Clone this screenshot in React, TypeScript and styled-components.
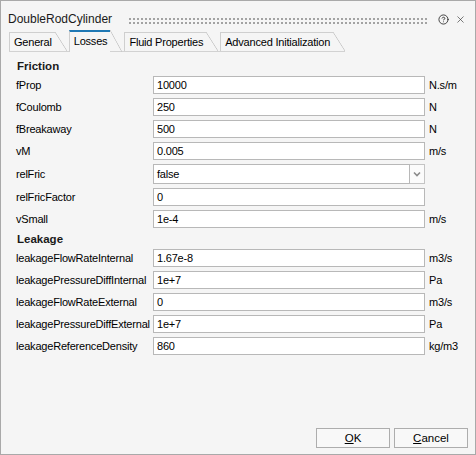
import React from "react";
import styled, { createGlobalStyle } from "styled-components";
import { CircleHelp, X } from "lucide-react";

const GlobalStyle = createGlobalStyle`
  html, body {
    margin: 0;
    padding: 0;
    background: #f5f5f5;
  }
  * {
    box-sizing: border-box;
  }
`;

type Row = { label: string; value: string; unit?: string; combo?: boolean };

const friction: Row[] = [
  { label: "fProp", value: "10000", unit: "N.s/m" },
  { label: "fCoulomb", value: "250", unit: "N" },
  { label: "fBreakaway", value: "500", unit: "N" },
  { label: "vM", value: "0.005", unit: "m/s" },
  { label: "relFric", value: "false", combo: true },
  { label: "relFricFactor", value: "0" },
  { label: "vSmall", value: "1e-4", unit: "m/s" },
];

const leakage: Row[] = [
  { label: "leakageFlowRateInternal", value: "1.67e-8", unit: "m3/s" },
  { label: "leakagePressureDiffInternal", value: "1e+7", unit: "Pa" },
  { label: "leakageFlowRateExternal", value: "0", unit: "m3/s" },
  { label: "leakagePressureDiffExternal", value: "1e+7", unit: "Pa" },
  { label: "leakageReferenceDensity", value: "860", unit: "kg/m3" },
];

const tabs = ["General", "Losses", "Fluid Properties", "Advanced Initialization"];

export default function App() {
  return (
    <>
      <GlobalStyle />
      <Window>
        <TitleBar>
          <Title>DoubleRodCylinder</Title>
          <Grip />
          <TitleIcons>
            <CircleHelp size={11} strokeWidth={1.8} color="#222" />
            <X size={11} strokeWidth={1.4} color="#333" />
          </TitleIcons>
        </TitleBar>
        <TabStrip>
          <TabRow>
            {tabs.map((t) => (
              <Tab key={t} $active={t === "Losses"}>
                {t}
              </Tab>
            ))}
          </TabRow>
        </TabStrip>
        <Content>
          <Section>
            <Heading>Friction</Heading>
            <FormGrid>
              {friction.map((r) => (
                <FieldRow key={r.label} row={r} />
              ))}
            </FormGrid>
          </Section>
          <Section $spaced>
            <Heading>Leakage</Heading>
            <FormGrid>
              {leakage.map((r) => (
                <FieldRow key={r.label} row={r} />
              ))}
            </FormGrid>
          </Section>
        </Content>
        <Footer>
          <Button>
            <u>O</u>K
          </Button>
          <Button>
            <u>C</u>ancel
          </Button>
        </Footer>
      </Window>
    </>
  );
}

function FieldRow({ row }: { row: Row }) {
  return (
    <>
      <Label>{row.label}</Label>
      {row.combo ? (
        <Combo>
          <ComboValue>{row.value}</ComboValue>
          <DropButton>
            <svg width="8" height="6" viewBox="0 0 8 6">
              <path d="M1 1.5 L4 4.5 L7 1.5" fill="none" stroke="#8a8a8a" strokeWidth="1.6" />
            </svg>
          </DropButton>
        </Combo>
      ) : (
        <Input readOnly value={row.value} />
      )}
      <Unit>{row.unit ?? ""}</Unit>
    </>
  );
}

const Window = styled.div`
  width: 476px;
  height: 455px;
  border: 1px solid #a9a9a9;
  background: #f5f5f5;
  display: flex;
  flex-direction: column;
  font-family: "Liberation Sans", Arial, sans-serif;
  color: #000;
`;

const TitleBar = styled.div`
  height: 29px;
  padding: 7px 9px 0 7px;
  display: flex;
  align-items: center;
`;

const Title = styled.span`
  font-size: 12px;
  color: #1a1a1a;
`;

const Grip = styled.div`
  flex: 1;
  height: 8px;
  margin: 4px 10px 0 16px;
  background-image: radial-gradient(circle at 2px 2px, #a3a3a3 0.75px, transparent 1px);
  background-size: 4px 4px;
`;

const TitleIcons = styled.div`
  display: flex;
  align-items: center;
  gap: 6px;
`;

const TabStrip = styled.div`
  height: 22px;
  padding-left: 8px;
  display: flex;
  align-items: flex-end;
`;

const TabRow = styled.div`
  display: flex;
  align-items: flex-end;
  border-bottom: 1px solid #d2d2d2;
  padding-right: 12px;
`;

const Tab = styled.div<{ $active?: boolean }>`
  position: relative;
  margin-right: 14px;
  padding: 0 3px 0 4px;
  font-size: 11px;
  letter-spacing: -0.2px;
  white-space: nowrap;
  border-left: 1px solid #cfcfcf;
  border-top: ${(p) => (p.$active ? "2px solid #1f78b4" : "1px solid #cfcfcf")};
  background: #f5f5f5;
  height: ${(p) => (p.$active ? "22px" : "19px")};
  line-height: 18px;
  margin-bottom: ${(p) => (p.$active ? "-1px" : "0")};

  &:last-child {
    margin-right: 0;
  }

  &::after {
    content: "";
    position: absolute;
    left: 100%;
    top: ${(p) => (p.$active ? "-2px" : "-1px")};
    bottom: 0;
    width: 12px;
    background: linear-gradient(
      to top right,
      transparent calc(50% - 0.7px),
      #c6c6c6 50%,
      transparent calc(50% + 0.7px)
    );
  }
`;

const Content = styled.div`
  flex: 1;
  padding: 6px 0 0 14px;
`;

const Section = styled.div<{ $spaced?: boolean }>`
  margin-top: ${(p) => (p.$spaced ? "3px" : "0")};
`;

const Heading = styled.div`
  height: 16px;
  line-height: 16px;
  margin-bottom: 2px;
  padding-left: 2px;
  font-size: 11.5px;
  font-weight: bold;
  color: #1a1a1a;
`;

const FormGrid = styled.div`
  display: grid;
  grid-template-columns: 138px 272px auto;
  row-gap: 4px;
  align-items: center;
`;

const Label = styled.div`
  font-size: 11px;
  letter-spacing: -0.2px;
  white-space: nowrap;
  padding-left: 1px;
`;

const Input = styled.input`
  height: 18px;
  width: 100%;
  margin: 0;
  border: 1px solid #b8b8b8;
  background: #fff;
  padding: 0 3px;
  font-family: "Liberation Sans", Arial, sans-serif;
  font-size: 11px;
  letter-spacing: -0.2px;
  color: #000;
  outline: none;
`;

const Combo = styled.div`
  display: flex;
  height: 20px;
`;

const ComboValue = styled.div`
  flex: 1;
  border: 1px solid #b8b8b8;
  background: #fff;
  padding: 0 3px;
  font-size: 11px;
  letter-spacing: -0.2px;
  line-height: 18px;
`;

const DropButton = styled.div`
  width: 15px;
  border: 1px solid #c4c4c4;
  border-left: none;
  background: #fbfbfb;
  display: flex;
  align-items: center;
  justify-content: center;
`;

const Unit = styled.div`
  padding-left: 4px;
  font-size: 11px;
  letter-spacing: -0.2px;
  white-space: nowrap;
`;

const Footer = styled.div`
  display: flex;
  justify-content: flex-end;
  gap: 4px;
  padding: 0 7px 6px 0;
`;

const Button = styled.button`
  width: 74px;
  height: 20px;
  margin: 0;
  padding: 0;
  border: 1px solid #adadad;
  background: #f8f8f8;
  font-family: "Liberation Sans", Arial, sans-serif;
  font-size: 11.5px;
  color: #000;
`;
